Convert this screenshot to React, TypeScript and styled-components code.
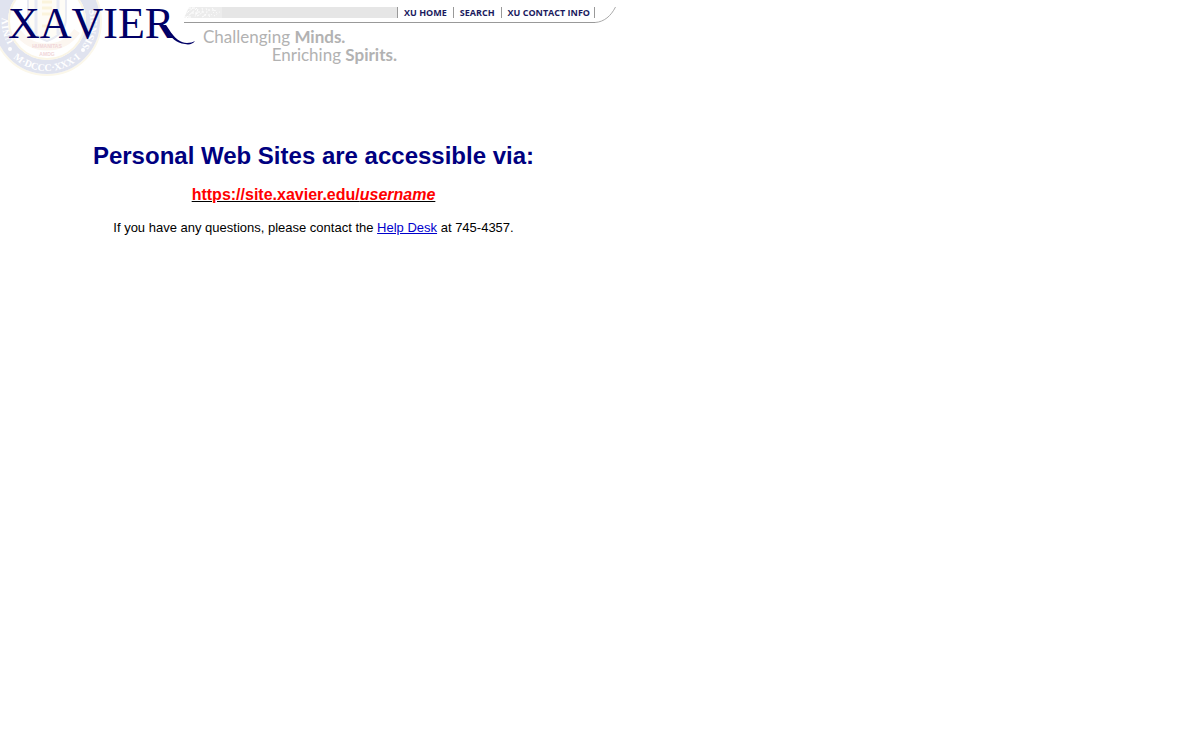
import styled, { createGlobalStyle } from "styled-components";

const NAVY = "#000066";
const GRAY = "#b2b2b2";
const RULE = "#999999";

const GlobalStyle = createGlobalStyle`
  body {
    margin: 0;
    background: #ffffff;
    color: #000000;
    font-family: "Liberation Sans", Arial, sans-serif;
  }
`;

const Page = styled.div`
  max-width: 627px;
`;

const Header = styled.header`
  display: flex;
  align-items: flex-start;
`;

const Logo = styled.svg`
  flex: none;
  width: 184px;
  height: 76px;
  overflow: visible;
`;

const SealText = styled.text`
  fill: #ffffff;
  font: bold 10px "Liberation Serif", serif;
`;

const MottoText = styled.text`
  fill: #f0d5d8;
  font: bold 5px "Liberation Sans", sans-serif;
  text-anchor: middle;
`;

const Wordmark = styled.text`
  fill: ${NAVY};
  font: 44px "Liberation Serif", serif;
  font-kerning: none;
`;

const HeaderBody = styled.div`
  flex: 1;
  padding: 7px 11px 0 0;
`;

const NavRow = styled.div`
  display: flex;
  align-items: flex-start;
`;

const NavBar = styled.nav`
  flex: 1;
  display: flex;
  padding-bottom: 4px;
  border-bottom: 1px solid ${RULE};
`;

const Stipple = styled.svg`
  flex: none;
  width: 38px;
  height: 11px;
`;

const Fill = styled.div`
  flex: 1;
  height: 11px;
  background: #e6e6e6;
`;

const NavLink = styled.a`
  padding: 0 6px;
  border-left: 1px solid ${RULE};
  color: #1a1a5e;
  font: bold 9px/11px "Open Sans", "Noto Sans", sans-serif;
  text-decoration: none;
  white-space: nowrap;

  &:last-child {
    padding-right: 4px;
    border-right: 1px solid ${RULE};
  }
`;

const Corner = styled.svg`
  flex: none;
  width: 21px;
  height: 16px;
`;

const Tagline = styled.p`
  width: 194px;
  margin: 5px 0 0 19px;
  color: ${GRAY};
  font: 17px/18px Lato, sans-serif;
`;

const TaglineEnd = styled.span`
  display: block;
  text-align: right;
`;

const Main = styled.main`
  padding-top: 66px;
  text-align: center;
`;

const Title = styled.h1`
  margin: 0;
  color: #000080;
  font-size: 24px;
  line-height: 28px;
`;

const SiteLink = styled.a`
  display: inline-block;
  margin-top: 16px;
  color: #ff0000;
  font-size: 16px;
  font-weight: bold;
  line-height: 18px;
  text-decoration: underline #000000;
`;

const Help = styled.p`
  margin: 16px 0 0;
  font-size: 13px;
  line-height: 16px;
`;

const HelpLink = styled.a`
  color: #0000cc;
`;

const XavierLogo = () => (
  <Logo viewBox="0 0 184 76" role="img" aria-label="Xavier">
    <defs>
      <path id="seal-bottom" d="M-3 21A50 50 0 0 0 97 21" />
      <path id="seal-left" d="M14 42A42 42 0 0 1 9 12" />
      <path id="seal-right" d="M89 10A43 43 0 0 1 82 46" />
    </defs>

    {/* seal */}
    <circle cx="47" cy="21" r="54" fill="none" stroke="#fbf7ea" strokeWidth="2" />
    <circle cx="47" cy="21" r="46" fill="none" stroke="#e0e3ef" strokeWidth="14" />
    <circle cx="47" cy="21" r="38" fill="none" stroke="#faf5e6" strokeWidth="2" />
    <path d="M28 0V18Q28 34 47 41Q66 34 66 18V0" fill="#fefcf6" stroke="#e8eaf2" strokeWidth="2" />
    <path d="M36 0V34M58 0V34" stroke="#e8eaf3" strokeWidth="3" />
    <path d="M42 2H52M42 8H52M42 14H52M42 26H52" stroke="#fbf4dc" strokeWidth="3" />
    <path d="M17 31Q28 47 47 47Q66 47 77 31" fill="none" stroke="#fcf6f0" strokeWidth="7" />
    <MottoText x="47" y="48">HUMANITAS</MottoText>
    <MottoText x="47" y="56">AMDG</MottoText>
    <SealText textAnchor="middle">
      <textPath href="#seal-bottom" startOffset="50%">M·DCCC·XXX·I</textPath>
    </SealText>
    <SealText>
      <textPath href="#seal-left">UNIV</textPath>
    </SealText>
    <SealText>
      <textPath href="#seal-right">SIENSIS</textPath>
    </SealText>
    <circle cx="10" cy="49" r="2" fill="#ffffff" />
    <circle cx="83" cy="50" r="2" fill="#ffffff" />

    {/* wordmark, with the long leg of its last letter */}
    <Wordmark x="8" y="38">XAVIER</Wordmark>
    <path
      d="M162 25L166 25C170 30 175 42 187 43C190 43 193 42 195 41C193 44 189 45 185 44C176 43 171 37 168 33Z"
      fill={NAVY}
    />
  </Logo>
);

const StippleFade = () => (
  <Stipple viewBox="0 0 38 11" aria-hidden="true">
    <path d="M5 0H38V11H0Z" fill="#ececec" />
    <g fill="none" stroke="#ffffff">
      <path d="M0 8L9 1M2 11L13 1M7 6H14M14 2L11 10" strokeDasharray="3 1" />
      <path d="M13 9Q20 6 18 1M18 10Q25 7 22 1" strokeDasharray="2 1" />
      <path d="M14 5H22M20 8H28M24 3H31" strokeDasharray="2 2" />
      <path d="M25 10L33 2M30 9L37 4M28 1L34 7" strokeDasharray="1 2" />
      <path d="M0 1H12M0 10H8" strokeDasharray="3 1" />
    </g>
  </Stipple>
);

const links = [
  { label: "XU HOME", href: "#home" },
  { label: "SEARCH", href: "#search" },
  { label: "XU CONTACT INFO", href: "#contact" },
];

export default function App() {
  return (
    <Page>
      <GlobalStyle />
      <Header>
        <XavierLogo />
        <HeaderBody>
          <NavRow>
            <NavBar>
              <StippleFade />
              <Fill />
              {links.map((link) => (
                <NavLink key={link.label} href={link.href}>
                  {link.label}
                </NavLink>
              ))}
            </NavBar>
            <Corner viewBox="0 0 21 16" aria-hidden="true">
              <path d="M0 15.5C9 15 16 9 20.5 0" fill="none" stroke="#aaaaaa" />
            </Corner>
          </NavRow>
          <Tagline>
            Challenging <b>Minds.</b>
            <TaglineEnd>
              Enriching <b>Spirits.</b>
            </TaglineEnd>
          </Tagline>
        </HeaderBody>
      </Header>
      <Main>
        <Title>Personal Web Sites are accessible via:</Title>
        <SiteLink href="https://site.xavier.edu/">
          https://site.xavier.edu/<i>username</i>
        </SiteLink>
        <Help>
          If you have any questions, please contact the <HelpLink href="#help">Help Desk</HelpLink> at 745-4357.
        </Help>
      </Main>
    </Page>
  );
}
